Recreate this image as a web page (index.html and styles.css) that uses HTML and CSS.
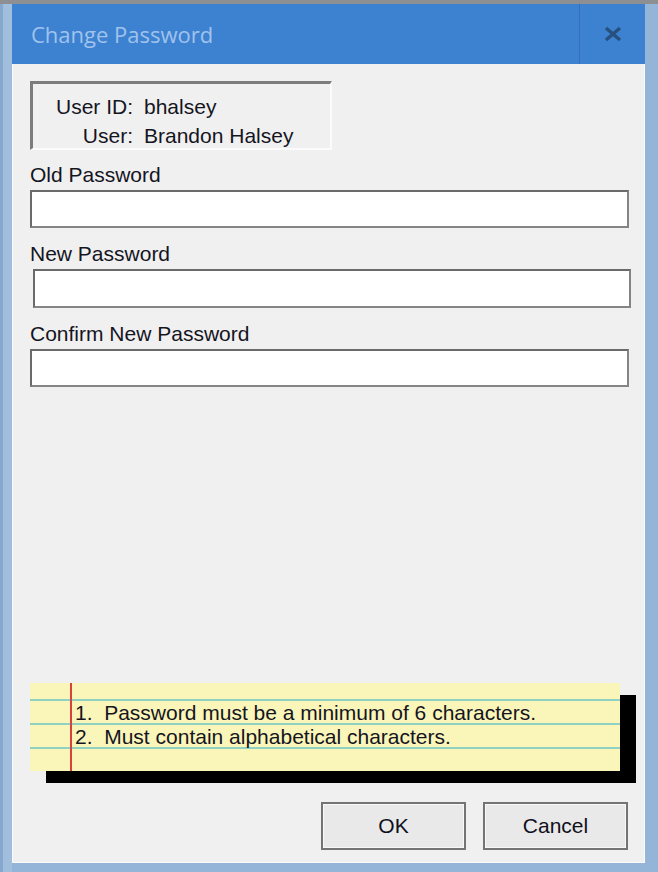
FILE: index.html
```html
<!DOCTYPE html>
<html>
<head>
<meta charset="utf-8">
<link rel="stylesheet" href="styles.css">
</head>
<body>
<div class="frame">
  <div class="titlebar">
    <div class="title">Change Password</div>
    <div class="close">
      <svg width="20" height="16" viewBox="0 0 20 16"><path d="M3 2 L17 14 M17 2 L3 14" stroke="#27507f" stroke-width="3.4" stroke-linecap="butt"/></svg>
    </div>
  </div>
  <div class="content">
    <div class="info">
      <div class="info-row"><span class="info-key">User ID:</span><span class="info-val">bhalsey</span></div>
      <div class="info-row"><span class="info-key">User:</span><span class="info-val">Brandon Halsey</span></div>
    </div>
    <div class="field field-first">
      <div class="label">Old Password</div>
      <div class="input"></div>
    </div>
    <div class="field">
      <div class="label">New Password</div>
      <div class="input input-shift"></div>
    </div>
    <div class="field">
      <div class="label">Confirm New Password</div>
      <div class="input"></div>
    </div>
    <div class="note">
      <div class="note-paper">
        <div class="note-line">1.&nbsp; Password must be a minimum of 6 characters.</div>
        <div class="note-line">2.&nbsp; Must contain alphabetical characters.</div>
      </div>
    </div>
    <div class="buttons">
      <div class="btn">OK</div>
      <div class="btn">Cancel</div>
    </div>
  </div>
</div>
</body>
</html>
```
FILE: styles.css
```css
html, body {
  margin: 0;
  padding: 0;
}
body {
  width: 658px;
  height: 872px;
  overflow: hidden;
  background: #95b5d8;
  font-family: "Liberation Sans", Arial, sans-serif;
}
.frame {
  box-sizing: border-box;
  width: 658px;
  height: 872px;
  display: flex;
  flex-direction: column;
  border-top: 4px solid #8d8f92;
  padding: 0 13px 9px 12px;
  background: linear-gradient(to right, #86a8cf 0, #86a8cf 3px, #a2bedd 3px, #a2bedd 12px, #95b5d8 12px);
}
.titlebar {
  height: 60px;
  display: flex;
  background: #3d81d1;
}
.title {
  flex: 1;
  padding-left: 19px;
  padding-top: 15px;
  color: #a0c3ec;
  font-family: "Open Sans", "Noto Sans", sans-serif;
  font-size: 22px;
  letter-spacing: 0;
}
.close {
  width: 66px;
  border-left: 1px solid #3470b8;
  display: flex;
  align-items: center;
  justify-content: center;
  padding-bottom: 1px;
  box-sizing: border-box;
}
.content {
  flex: 1;
  background: #f0f0f0;
  border: 1px solid #fafafa;
  border-top: 0;
  display: flex;
  flex-direction: column;
  padding: 17px 15px 12px 17px;
  color: #15151f;
  font-size: 21px;
}
.info {
  width: 302px;
  height: 69px;
  box-sizing: border-box;
  border-top: 3px solid #7c7c7c;
  border-left: 3px solid #7c7c7c;
  border-right: 2px solid #fbfbfb;
  border-bottom: 2px solid #fbfbfb;
  padding-top: 8px;
  line-height: 29px;
}
.info-row {
  display: flex;
}
.info-key {
  width: 100px;
  text-align: right;
  padding-right: 11px;
}
.field {
  display: flex;
  flex-direction: column;
}
.label {
  margin-top: 14px;
  line-height: 24px;
  height: 24px;
  margin-bottom: 3px;
}
.field-first .label {
  margin-top: 13px;
}
.input {
  height: 38px;
  box-sizing: border-box;
  background: #fff;
  border: 2px solid #858585;
  border-top-color: #6a6a6a;
  border-left-color: #6a6a6a;
}
.input-shift {
  margin-left: 3px;
  margin-right: -2px;
  height: 39px;
}
.note {
  margin-top: auto;
  margin-left: 0;
  width: 602px;
  height: 99px;
  position: relative;
}
.note-paper {
  position: relative;
  z-index: 1;
  width: 590px;
  height: 88px;
  box-sizing: border-box;
  padding-top: 18px;
  padding-left: 45px;
  background-color: #faf5b9;
  background-image:
    linear-gradient(to right, transparent 40px, #d8423a 40px, #d8423a 42px, transparent 42px),
    repeating-linear-gradient(to bottom, transparent 0, transparent 16px, #8fd1c3 16px, #8fd1c3 18px, transparent 18px, transparent 24px);
  background-size: 100% 100%, 100% 72px;
  background-position: 0 0, 0 0;
  background-repeat: no-repeat;
  box-shadow: 16px 12px 0 0 #000;
  line-height: 24px;
}
.note-line {
  white-space: nowrap;
}
.buttons {
  display: flex;
  justify-content: flex-end;
  gap: 17px;
  margin-top: 20px;
  padding-right: 1px;
}
.btn {
  width: 145px;
  height: 48px;
  box-sizing: border-box;
  border: 2px solid #747474;
  box-shadow: inset 0 0 0 1px #f8f8f8;
  background: #e9e9e9;
  display: flex;
  align-items: center;
  justify-content: center;
  font-size: 21px;
  color: #10101c;
}
```
